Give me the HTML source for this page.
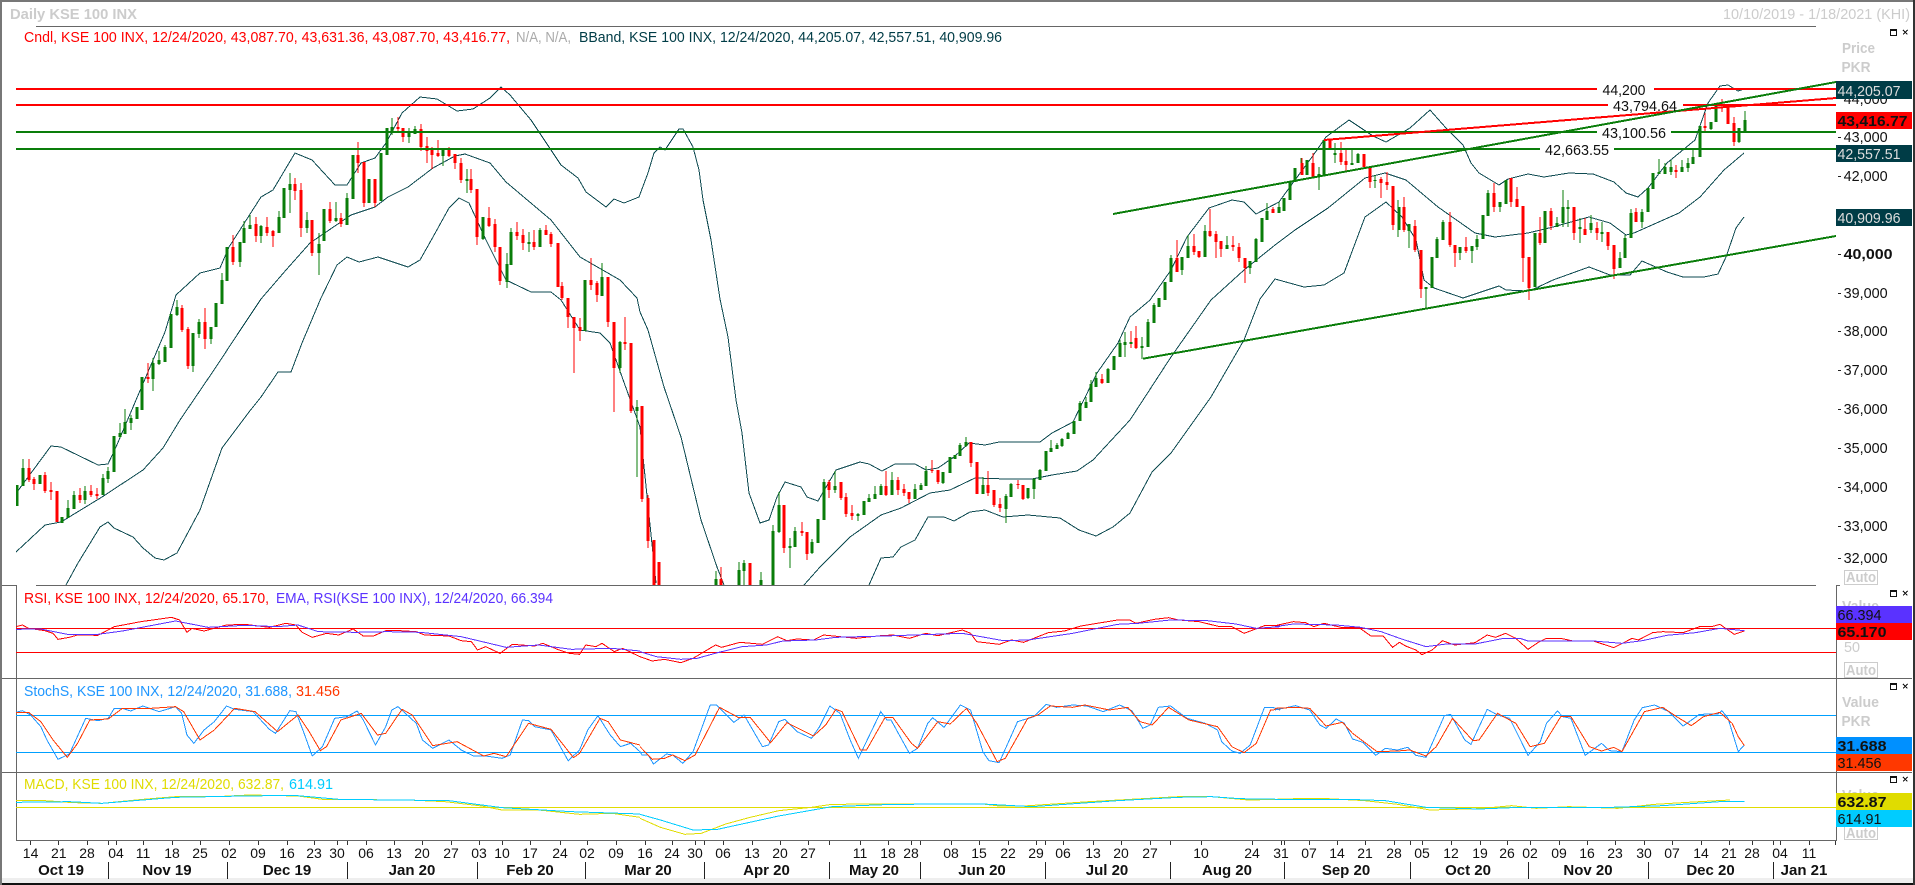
<!DOCTYPE html>
<html><head><meta charset="utf-8"><title>Daily KSE 100 INX</title>
<style>html,body{margin:0;padding:0;background:#fff;overflow:hidden}svg{display:block}text{font-family:"Liberation Sans",sans-serif;font-size:15px}.d text{font-size:14px}.b{font-weight:bold}.f{fill:none}.n{vector-effect:non-scaling-stroke;fill:none;stroke-width:1}path{shape-rendering:crispEdges}</style></head><body>
<svg width="1915" height="885" viewBox="0 0 1915 885" xmlns="http://www.w3.org/2000/svg">
<defs><clipPath id="m"><rect x="16" y="27" width="1820" height="558"/></clipPath></defs>
<rect width="1915" height="885" fill="#fff"/>
<rect y="878" width="1915" height="5" fill="#eee"/><rect y="883" width="1915" height="2" fill="#111"/>
<rect width="1915" height="2" fill="#777"/><rect width="2" height="885" fill="#777"/><rect x="1913" width="2" height="885" fill="#333"/>
<text x="10" y="19" class="b" fill="#ccc" textLength="127" lengthAdjust="spacingAndGlyphs">Daily KSE 100 INX</text>
<text x="1723" y="19" fill="#ccc" textLength="187" lengthAdjust="spacingAndGlyphs">10/10/2019 - 1/18/2021 (KHI)</text>
<text x="24" y="42" fill="#f00" textLength="486" lengthAdjust="spacingAndGlyphs">Cndl, KSE 100 INX, 12/24/2020, 43,087.70, 43,631.36, 43,087.70, 43,416.77,</text>
<text x="516" y="42" fill="#aaa" textLength="55" lengthAdjust="spacingAndGlyphs">N/A, N/A,</text>
<text x="579" y="42" fill="#003c46" textLength="423" lengthAdjust="spacingAndGlyphs">BBand, KSE 100 INX, 12/24/2020, 44,205.07, 42,557.51, 40,909.96</text>
<g clip-path="url(#m)">
<path class="f" stroke="#0d4a50" d="M17 492L51 446L61 447L98 465L108 464L116 447L165 332L176 295L200 273L220 268L229 247L261 197L273 190L295 153L312 160L335 185L347 185L361 163L375 158L386 143L402 113L420 97L437 99L457 111L473 109L490 98L501 87L510 95L531 120L561 165L578 178L586 192L606 207L614 199L624 203L639 197L648 173L654 153L660 147L665 150L679 129L683 129L693 147L699 170L703 200L711 240L720 299L728 337L736 400L742 433L749 493L760 523L769 520L777 497L785 482L801 487L807 497L818 501L836 470L860 462L869 464L882 471L895 464L915 464L926 470L938 468L954 457L969 443L985 445L999 442L1040 442L1052 433L1073 422L1097 373L1118 343L1130 317L1150 300L1171 270L1187 237L1209 208L1232 200L1244 202L1256 214L1279 202L1295 180L1312 157L1326 137L1349 120L1373 136L1386 142L1410 128L1430 110L1446 128L1463 145L1471 163L1479 173L1499 185L1508 179L1528 174L1544 177L1569 173L1593 174L1614 182L1626 193L1638 197L1648 188L1667 163L1695 140L1708 103L1720 86L1728 85L1738 91L1744 89"/>
<path class="f" stroke="#0d4a50" d="M16 552L45 525L61 522L102 497L143 470L163 448L180 420L216 367L239 332L261 299L286 270L310 243L351 215L375 207L388 197L408 187L433 168L455 156L465 154L490 163L506 182L551 220L580 257L620 280L637 298L640 312L648 330L664 387L681 437L701 520L717 567L724 585M804 585L820 567L850 537L881 515L901 508L930 493L950 490L975 478L1007 479L1032 479L1052 475L1077 471L1093 460L1130 420L1171 357L1211 300L1244 270L1275 245L1295 230L1328 208L1365 178L1385 173L1406 180L1438 207L1475 233L1495 237L1528 233L1553 227L1589 217L1610 223L1626 235L1634 233L1679 213L1700 197L1724 170L1744 153"/>
<path class="f" stroke="#0d4a50" d="M66 585L78 563L100 527L108 522L114 528L133 537L143 548L155 558L164 560L177 553L200 510L222 448L249 412L261 397L278 372L291 372L302 343L321 298L337 265L347 257L359 262L378 257L408 267L420 260L433 237L449 208L459 198L469 203L486 240L506 280L531 292L551 292L561 300L580 330L600 333L610 343L616 360L640 427L642 447L656 583M869 585L881 558L893 557L901 547L915 540L928 517L944 517L954 521L970 512L985 510L1003 517L1028 515L1060 518L1079 530L1096 536L1113 527L1130 513L1152 472L1171 453L1211 397L1244 340L1260 299L1275 279L1304 287L1324 285L1344 273L1365 217L1386 202L1402 217L1416 240L1424 280L1434 288L1463 298L1499 286L1506 290L1528 291L1536 288L1553 280L1589 267L1610 275L1630 275L1642 261L1667 272L1683 277L1704 277L1718 274L1726 257L1736 228L1744 217"/>
<g class="f">
<path class="f" stroke="#0a7d0a" stroke-width="1" d="M23 459V486M68 500V518M74 491V509M85 486V504M103 474V495M108 467V483M120 423V438M125 409V434M131 415V430M153 358V391M159 351V365M165 345V362M177 300V316M193 333V372M199 319V338M211 327V344M222 273V304M240 242V267M244 221V243M250 215V229M261 225V243M279 211V233M290 173V213M307 212V233M319 233V275M336 202V222M347 193V225M392 118V135M409 128V143M415 126V134M443 148V166M467 169V193M483 217V240M507 253V288M511 228V265M529 232V252M540 228V247M602 263V296M620 341V373M637 400V477M716 571V585M739 562V585M744 560V585M761 572V585M773 525V585M779 492V533M790 538V568M795 527V547M812 539V554M824 479V520M835 471V493M858 513V521M869 494V502M875 486V499M881 484V495M892 472V495M915 484V499M921 483V490M926 466V486M943 472V484M950 457V473M960 443V456M966 437V447M983 477V494M1006 494V523M1011 483V497M1028 488V499M1034 478V499M1040 469V480M1051 440V452M1057 443V449M1062 438V447M1068 432V439M1080 401V421M1086 397V408M1091 380V402M1096 372V387M1108 368V383M1120 340V357M1125 332V357M1142 337V359M1148 319V347M1154 303V323M1171 255V282M1182 257V275M1188 235V258M1205 225V257M1227 236V249M1250 261V274M1256 238V262M1267 203V220M1279 202V213M1284 198V211M1301 158V175M1319 167V190M1335 143V163M1352 150V165M1358 153V163M1375 175V188M1398 200V237M1409 224V248M1426 287V308M1437 237V258M1443 220V240M1460 247V260M1472 246V263M1477 235V250M1488 190V216M1500 202V212M1557 217V227M1563 190V227M1568 200V227M1580 218V243M1591 215V233M1602 222V242M1620 252V268M1625 235V258M1631 209V238M1642 209V228M1659 159V173M1665 163V174M1671 160V175M1682 160V172M1688 158V172M1693 150V164M1711 122V130M1739 128V143M1745 111V133"/>
<path class="f" stroke="#f00" stroke-width="1" d="M29 459V482M34 477V490M45 472V493M51 482V500M80 488V503M91 485V497M97 488V499M148 363V383M182 305V332M188 327V369M205 308V349M233 235V265M256 217V242M267 217V236M273 230V247M295 178V200M301 183V237M312 220V256M330 202V223M341 213V227M358 142V173M364 162V207M375 179V207M398 117V132M403 128V142M421 124V151M427 137V163M432 147V169M438 140V157M449 147V157M455 154V169M461 158V183M471 169V193M477 189V245M489 207V227M495 219V252M500 247V285M517 222V240M523 229V250M534 230V250M546 225V235M551 232V247M562 282V300M568 298V328M574 317V373M580 318V341M591 258V290M597 281V302M608 277V327M614 322V412M625 317V350M631 343V413M642 406V502M648 495V548M721 567V585M784 505V553M802 522V536M807 532V560M829 480V498M841 482V500M846 493V517M852 505V520M886 471V496M898 477V495M904 484V496M909 492V503M932 460V473M938 470V484M971 442V467M988 471V496M994 490V507M1000 498V512M1018 480V489M1023 485V500M1102 374V384M1131 331V348M1136 326V349M1177 240V272M1194 234V255M1199 251V258M1210 209V237M1216 231V258M1221 241V257M1233 236V251M1239 243V262M1245 258V283M1273 207V213M1302 158V175M1313 153V177M1341 142V165M1346 150V171M1364 154V168M1370 168V188M1381 177V198M1387 172V190M1393 186V230M1404 197V232M1415 220V252M1421 250V298M1450 212V247M1455 245V267M1466 237V253M1494 183V212M1511 178V207M1517 187V207M1523 206V282M1529 257V300M1540 217V245M1551 208V230M1574 207V240M1585 218V235M1597 222V240M1608 232V250M1614 245V279M1636 208V222M1676 165V178M1705 113V131M1722 99V112M1728 105V124M1734 117V146"/>
<path class="f" stroke="#0a7d0a" stroke-width="3" d="M17 485V506M23 468V486M40 475V484M62 517V523M68 508V518M74 495V509M85 491V500M103 478V495M108 471V479M114 436V472M120 433V437M125 422V434M131 418V423M137 407V419M142 377V410M153 363V379M159 360V364M165 347V362M171 314V348M177 307V315M193 333V366M199 322V334M211 327V339M216 303V327M222 280V304M227 247V281M240 242V262M244 228V243M250 225V229M261 226V236M279 217V233M284 188V218M290 184V190M307 220V228M319 244V253M324 209V241M336 218V221M347 198V225M353 155V199M369 179V203M381 153V201M387 128V155M392 127V131M409 132V137M415 129V134M443 148V156M467 179V181M483 217V239M507 264V282M511 232V265M529 242V244M540 230V247M585 280V331M602 277V296M620 342V368M637 407V411M716 579V585M739 570V585M744 563V571M761 580V585M773 531V585M779 505V532M790 546V548M795 531V547M812 542V553M818 519V543M824 482V520M835 486V490M858 514V516M864 501V515M869 498V502M875 494V499M881 486V495M892 480V495M915 489V499M921 485V490M926 471V486M943 472V483M950 457V473M955 455V459M960 445V456M966 442V446M983 485V494M1006 496V509M1011 484V497M1028 488V498M1034 479V489M1040 470V480M1046 451V471M1051 448V452M1057 445V449M1062 439V446M1068 433V439M1074 421V434M1080 403V421M1086 402V408M1091 384V402M1096 378V387M1108 369V383M1114 356V370M1120 343V357M1125 342V345M1131 342V344M1142 346V348M1148 322V347M1154 305V323M1159 298V307M1165 282V300M1171 258V282M1182 257V270M1188 246V258M1205 231V257M1227 245V249M1250 261V268M1256 239V262M1262 218V242M1267 211V220M1279 207V213M1284 198V211M1290 182V200M1295 168V182M1307 160V175M1319 174V177M1324 140V175M1335 153V155M1352 163V165M1358 154V163M1375 180V181M1399 207V230M1409 224V231M1426 287V289M1432 257V288M1437 239V258M1443 222V240M1460 247V253M1472 246V251M1477 239V247M1483 215V239M1488 193V216M1500 202V207M1506 180V204M1535 233V287M1545 211V243M1557 223V227M1563 207V223M1568 207V209M1580 227V229M1591 223V230M1602 232V234M1620 258V268M1625 238V258M1631 213V238M1642 212V222M1648 188V212M1653 173V189M1659 172V174M1665 167V174M1671 167V172M1682 167V172M1688 163V168M1693 157V164M1700 126V157M1711 122V129M1716 105V122M1739 128V142M1745 120V133"/>
<path class="f" stroke="#f00" stroke-width="3" d="M29 468V480M34 479V484M45 475V491M51 490V492M57 491V522M80 495V500M91 491V495M97 494V496M148 377V379M182 308V330M188 329V366M205 322V339M233 247V262M256 224V236M267 227V233M273 231V236M295 184V191M301 190V228M312 220V253M330 209V221M341 218V224M358 155V163M364 162V203M375 179V203M398 127V129M403 128V137M421 129V147M427 146V151M432 150V155M438 153V156M449 149V156M455 154V163M461 163V180M471 179V190M477 189V237M489 218V226M495 224V247M500 247V281M517 232V236M523 235V243M534 242V247M546 230V235M551 234V244M558 243V287M562 286V298M568 298V317M574 317V328M580 327V331M591 280V285M597 283V295M608 277V322M614 322V368M625 342V344M631 343V411M642 406V499M648 498V541M654 540V585M659 562V585M721 579V585M750 563V585M784 505V548M802 531V533M807 532V554M829 482V490M841 482V498M846 497V514M852 513V516M886 486V495M898 480V490M904 489V493M909 492V499M932 470V471M938 470V482M971 442V463M977 462V494M988 485V493M994 490V505M1000 504V508M1018 484V485M1023 485V499M1102 379V383M1136 338V348M1177 258V272M1194 246V252M1199 251V257M1210 231V236M1216 234V242M1221 241V249M1233 245V247M1239 247V258M1245 258V268M1273 209V213M1302 163V175M1313 163V177M1330 140V148M1341 153V162M1346 161V165M1364 154V167M1370 168V182M1381 179V183M1387 182V185M1393 186V225M1404 207V230M1415 226V250M1421 250V289M1450 222V245M1455 245V253M1466 247V251M1494 193V207M1511 178V202M1517 199V207M1523 206V258M1529 257V288M1540 233V243M1551 211V226M1574 207V233M1585 229V235M1597 228V233M1608 232V246M1614 245V269M1636 212V222M1676 170V172M1705 126V128M1722 104V106M1728 105V124M1734 123V142"/>
</g>
<path class="f" stroke="#f00" stroke-width="2" d="M16 89H1597M1654 89H1836M16 105H1608M1683 105H1836"/>
<path class="f" stroke="#0a7d0a" stroke-width="2" d="M16 132H1597M1671 132H1836M16 149H1540M1614 149H1836"/>
<path class="f" stroke="#f00" stroke-width="2" d="M1324 140L1836 98"/>
<path class="f" stroke="#0a7d0a" stroke-width="2" d="M1113 214L1836 82M1143 358.7L1836 236"/>
</g>
<g fill="#111">
<text x="1602.500" y="95" textLength="43" lengthAdjust="spacingAndGlyphs">44,200</text>
<text x="1613" y="111" textLength="64" lengthAdjust="spacingAndGlyphs">43,794.64</text>
<text x="1602" y="138" textLength="64" lengthAdjust="spacingAndGlyphs">43,100.56</text>
<text x="1545" y="155" textLength="64" lengthAdjust="spacingAndGlyphs">42,663.55</text>
</g>
<!-- panels -->
<g stroke="#666" fill="none">
<path d="M36 26.500H1816M36 585.500H1816M2 585.500H16.500V840.500H1836.500V585.500H1840M2 678.500H1912M2 772.500H1912"/>
<path stroke="#f00" d="M16 628.500H1836M16 652.500H1836"/>
<path stroke="#00a0ff" d="M16 715.500H1836M16 752.500H1836"/>
<path stroke="#e0dc00" d="M16 807.500H1836"/>
</g>
<text x="24" y="603" fill="#f00" textLength="245" lengthAdjust="spacingAndGlyphs">RSI, KSE 100 INX, 12/24/2020, 65.170,</text>
<text x="276" y="603" fill="#5a32ff" textLength="277" lengthAdjust="spacingAndGlyphs">EMA, RSI(KSE 100 INX), 12/24/2020, 66.394</text>
<text x="24" y="696" fill="#1e96ff" textLength="268" lengthAdjust="spacingAndGlyphs">StochS, KSE 100 INX, 12/24/2020, 31.688,</text>
<text x="296" y="696" fill="#ff3800" textLength="44" lengthAdjust="spacingAndGlyphs">31.456</text>
<text x="24" y="789" fill="#e0dc00" textLength="260" lengthAdjust="spacingAndGlyphs">MACD, KSE 100 INX, 12/24/2020, 632.87,</text>
<text x="289" y="789" fill="#00ccff" textLength="44" lengthAdjust="spacingAndGlyphs">614.91</text>
<g transform="translate(0,570) scale(.40816,.33333)">
<path class="n" stroke="#f00" d="M39 170L55 165L70 175L110 182L130 190L142 208L170 202L190 195L240 196L280 170L345 155L420 142L440 150L458 187L470 175L500 183L555 165L600 163L660 172L700 160L725 165L740 187L765 202L800 190L830 195L865 177L890 198L915 198L945 182L980 182L1020 185L1040 195L1100 198L1130 212L1155 215L1170 240L1190 230L1225 250L1255 223L1310 228L1330 220L1370 240L1395 250L1420 253L1435 225L1460 230L1475 220L1505 245L1525 235L1568 260"/>
<path class="n" stroke="#5a32ff" d="M39 178L100 177L165 193L240 193L300 183L430 153L510 172L600 166L680 170L730 165L780 185L870 187L950 185L1030 187L1130 200L1240 232L1320 225L1400 238L1500 235L1568 243"/>
<path class="n" stroke="#1e96ff" d="M39 427L55 422L75 435L100 470L115 510L142 568L170 552L210 445L240 452L265 445L280 415L300 415L320 423L350 408L390 425L430 410L445 430L458 495L475 520L500 480L525 455L555 408L575 418L620 425L660 478L675 490L710 422L725 425L745 490L765 558L790 530L820 445L850 440L875 423L890 450L920 525L945 470L960 420L975 410L1020 460L1035 510L1060 535L1100 510L1130 540L1160 558L1190 558L1230 565L1250 555L1280 450L1295 452L1310 470L1350 480L1392 572L1420 540L1440 480L1465 437L1495 495L1520 530L1545 520L1568 545"/>
<path class="n" stroke="#ff3800" d="M39 427L70 427L100 455L130 510L165 562L190 520L220 450L265 447L300 415L370 415L430 410L450 425L490 510L525 480L575 415L625 425L680 485L695 470L730 435L755 480L785 542L800 530L835 450L885 430L925 495L945 490L985 418L1010 435L1060 527L1120 515L1185 558L1210 550L1240 560L1295 460L1350 478L1405 563L1420 550L1470 445L1490 455L1520 510L1568 525"/>
<path class="n" stroke="#e0dc00" d="M39 692L110 692L180 698L250 700L350 688L430 680L530 680L610 675L730 678L790 688L1000 690L1090 695L1180 708L1230 720L1320 720L1420 733L1500 730L1568 742"/>
<path class="n" stroke="#00ccff" d="M39 697L170 695L250 700L430 682L600 678L720 676L830 688L1100 692L1230 713L1400 725L1568 732"/>
</g>
<g transform="translate(640,570) scale(.40816,.33333)">
<path class="n" stroke="#f00" d="M0 260L30 273L60 268L100 278L130 265L185 225L200 232L245 217L300 223L337 200L360 212L385 207L425 210L450 195L490 200L530 205L590 197L620 195L660 205L700 190L730 197L790 180L810 190L825 215L880 223L910 210L940 217L1000 188L1040 183L1080 168L1120 160L1170 150L1200 150L1215 160L1260 148L1295 143L1320 150L1370 155L1420 170L1450 170L1480 190L1530 167L1568 167"/>
<path class="n" stroke="#5a32ff" d="M0 245L40 260L100 268L140 265L190 248L250 230L310 225L350 213L430 210L480 202L600 198L790 190L890 212L950 210L1060 190L1170 163L1220 160L1300 150L1390 152L1460 162L1510 175L1568 170"/>
<path class="n" stroke="#1e96ff" d="M0 545L5 555L20 555L33 582L65 552L80 555L105 580L130 545L172 405L187 405L230 457L255 435L300 530L315 525L340 455L355 448L385 485L420 505L440 470L465 408L490 430L515 510L535 565L590 425L605 450L615 450L660 550L680 535L705 460L717 443L745 472L785 405L810 420L840 545L855 572L880 578L925 455L965 440L995 403L1020 412L1060 405L1095 408L1135 425L1175 405L1205 422L1232 475L1250 465L1270 412L1300 408L1340 445L1385 460L1415 480L1425 515L1450 543L1470 550L1495 525L1530 412L1550 412L1568 420"/>
<path class="n" stroke="#ff3800" d="M0 530L30 568L60 565L80 555L110 572L135 555L195 412L240 442L270 442L320 518L360 458L425 498L455 465L480 418L495 425L540 540L555 540L600 443L620 443L665 520L680 535L730 455L760 462L800 415L825 460L875 575L895 565L950 445L975 435L1005 408L1060 412L1090 405L1150 420L1195 412L1225 455L1255 465L1295 412L1345 450L1415 470L1450 530L1480 548L1510 520L1545 420L1568 418"/>
<path class="n" stroke="#e0dc00" d="M0 745L50 772L110 793L150 790L210 762L270 742L340 722L420 712L470 703L620 702L840 702L880 708L940 708L1100 695L1320 680L1400 680L1490 690L1568 688"/>
<path class="n" stroke="#00ccff" d="M0 733L50 750L130 780L190 778L340 738L470 710L620 703L840 702L960 710L1170 692L1320 682L1400 680L1470 686L1568 688"/>
</g>
<g transform="translate(1275,570) scale(.40816,.33333)">
<path class="n" stroke="#f00" d="M0 167L45 155L75 158L95 170L120 160L165 173L205 172L235 198L265 198L288 232L305 217L320 228L345 240L360 254L385 240L410 212L440 225L490 218L520 195L540 202L565 190L590 205L620 238L645 217L665 205L700 205L730 213L780 213L830 233L875 205L890 210L925 188L950 185L1000 188L1040 170L1070 170L1090 163L1125 193L1150 183"/>
<path class="n" stroke="#5a32ff" d="M0 170L45 162L150 165L210 172L260 185L310 207L370 230L420 222L490 222L560 205L600 205L620 213L780 213L850 220L900 212L960 196L1030 188L1090 175L1150 182"/>
<path class="n" stroke="#1e96ff" d="M0 420L20 415L50 407L85 420L110 465L125 475L150 447L170 460L190 507L215 517L247 556L270 535L300 540L325 532L345 556L370 562L415 437L430 433L465 510L480 523L520 418L545 435L575 445L620 556L650 515L665 460L692 423L705 440L725 445L760 556L800 520L820 542L850 545L880 450L900 413L930 405L965 425L1000 468L1040 433L1085 432L1095 422L1110 445L1135 545L1150 525"/>
<path class="n" stroke="#ff3800" d="M0 415L50 412L85 415L125 468L165 457L190 490L250 545L300 543L330 540L370 558L395 530L435 445L485 512L500 510L545 430L590 460L625 530L660 520L700 440L725 440L770 530L800 543L830 532L850 545L905 425L950 412L980 437L1020 467L1050 440L1090 427L1120 460L1135 500L1150 527"/>
<path class="n" stroke="#e0dc00" d="M0 688L50 686L130 686L220 692L300 703L380 720L500 716L580 707L640 715L720 710L840 715L930 703L1040 695L1115 690"/>
<path class="n" stroke="#00ccff" d="M0 688L180 688L270 692L370 712L500 717L600 712L800 713L950 707L1090 695L1150 694"/>
</g>
<!-- right axis -->
<g fill="#111">
<text x="1843.600" y="104" textLength="44" lengthAdjust="spacingAndGlyphs">44,000</text>
<text x="1843.600" y="142" textLength="44" lengthAdjust="spacingAndGlyphs">43,000</text>
<text x="1843.600" y="181" textLength="44" lengthAdjust="spacingAndGlyphs">42,000</text>
<text x="1843.600" y="259" class="b" textLength="49" lengthAdjust="spacingAndGlyphs">40,000</text>
<text x="1843.600" y="298" textLength="44" lengthAdjust="spacingAndGlyphs">39,000</text>
<text x="1843.600" y="336" textLength="44" lengthAdjust="spacingAndGlyphs">38,000</text>
<text x="1843.600" y="375" textLength="44" lengthAdjust="spacingAndGlyphs">37,000</text>
<text x="1843.600" y="414" textLength="44" lengthAdjust="spacingAndGlyphs">36,000</text>
<text x="1843.600" y="453" textLength="44" lengthAdjust="spacingAndGlyphs">35,000</text>
<text x="1843.600" y="492" textLength="44" lengthAdjust="spacingAndGlyphs">34,000</text>
<text x="1843.600" y="531" textLength="44" lengthAdjust="spacingAndGlyphs">33,000</text>
<text x="1843.600" y="563" textLength="44" lengthAdjust="spacingAndGlyphs">32,000</text>
</g>
<path stroke="#222" d="M1838 137.500H1841M1838 176.500H1841M1838 254.500H1841M1838 293.500H1841M1838 331.500H1841M1838 370.500H1841M1838 409.500H1841M1838 448.500H1841M1838 487.500H1841M1838 526.500H1841M1838 558.500H1841"/>
<g fill="#ccc">
<text x="1842" y="53" class="b" textLength="33" lengthAdjust="spacingAndGlyphs">Price</text>
<text x="1841.500" y="72" class="b" textLength="29" lengthAdjust="spacingAndGlyphs">PKR</text>
<text x="1842" y="611" class="b" textLength="37" lengthAdjust="spacingAndGlyphs">Value</text>
<text x="1844" y="652" textLength="16" lengthAdjust="spacingAndGlyphs">50</text>
<text x="1842" y="707" class="b" textLength="37" lengthAdjust="spacingAndGlyphs">Value</text>
<text x="1841.500" y="726" class="b" textLength="29" lengthAdjust="spacingAndGlyphs">PKR</text>
<text x="1842" y="800" class="b" textLength="37" lengthAdjust="spacingAndGlyphs">Value</text>
<text x="1846" y="582" class="b" textLength="30" lengthAdjust="spacingAndGlyphs">Auto</text>
<text x="1846" y="675" class="b" textLength="30" lengthAdjust="spacingAndGlyphs">Auto</text>
<text x="1846" y="838" class="b" textLength="30" lengthAdjust="spacingAndGlyphs">Auto</text>
</g>
<g fill="none" stroke="#ccc" shape-rendering="crispEdges"><rect x="1844.500" y="570.500" width="33" height="14"/><rect x="1844.500" y="662.500" width="33" height="15"/><rect x="1844.500" y="826.500" width="33" height="13"/></g>
<g>
<rect x="1836" y="81" width="76" height="18" fill="#003c46"/><text x="1837.500" y="96" fill="#ddd" textLength="63" lengthAdjust="spacingAndGlyphs">44,205.07</text>
<rect x="1836" y="112" width="76" height="17" fill="#f00"/><text x="1837.500" y="126" class="b" fill="#111" textLength="70" lengthAdjust="spacingAndGlyphs">43,416.77</text>
<rect x="1836" y="145" width="76" height="17" fill="#003c46"/><text x="1837.500" y="159" fill="#ddd" textLength="63" lengthAdjust="spacingAndGlyphs">42,557.51</text>
<rect x="1836" y="209" width="76" height="17" fill="#003c46"/><text x="1837.500" y="223" fill="#ddd" textLength="63" lengthAdjust="spacingAndGlyphs">40,909.96</text>
<rect x="1836" y="606" width="76" height="17" fill="#5a32ff"/><text x="1837.500" y="620" fill="#111" textLength="44" lengthAdjust="spacingAndGlyphs">66.394</text>
<rect x="1836" y="623" width="76" height="17" fill="#f00"/><text x="1837.500" y="637" class="b" fill="#111" textLength="49" lengthAdjust="spacingAndGlyphs">65.170</text>
<rect x="1836" y="737" width="76" height="17" fill="#0090ff"/><text x="1837.500" y="751" class="b" fill="#111" textLength="49" lengthAdjust="spacingAndGlyphs">31.688</text>
<rect x="1836" y="754" width="76" height="17" fill="#ff3800"/><text x="1837.500" y="768" fill="#111" textLength="44" lengthAdjust="spacingAndGlyphs">31.456</text>
<rect x="1836" y="793" width="76" height="17" fill="#e0dc00"/><text x="1837.500" y="807" class="b" fill="#111" textLength="49" lengthAdjust="spacingAndGlyphs">632.87</text>
<rect x="1836" y="810" width="76" height="17" fill="#00ccff"/><text x="1837.500" y="824" fill="#111" textLength="44" lengthAdjust="spacingAndGlyphs">614.91</text>
</g>
<!-- window icons -->
<g fill="none" stroke="#111">
<path d="M1890.500 29.500h6v6h-6zM1890.500 30.500h6M1890.500 590.500h6v6h-6zM1890.500 591.500h6M1890.500 683.500h6v6h-6zM1890.500 684.500h6M1890.500 776.500h6v6h-6zM1890.500 777.500h6"/>
</g>
<path fill="none" stroke="#111" d="M1903 30l4.500 4.500m0-4.500l-4.500 4.500M1903 591l4.500 4.500m0-4.500l-4.500 4.500M1903 684l4.500 4.500m0-4.500l-4.500 4.500M1903 777l4.500 4.500m0-4.500l-4.500 4.500"/>
<!-- x axis -->
<path stroke="#333" fill="none" d="M30.500 841v4M58.500 841v4M87.500 841v4M108.500 841v4M116.500 841v4M143.500 841v4M172.500 841v4M200.500 841v4M229.500 841v4M258.500 841v4M287.500 841v4M314.500 841v4M337.500 841v4M347.500 841v4M366.500 841v4M394.500 841v4M422.500 841v4M451.500 841v4M479.500 841v4M502.500 841v4M530.500 841v4M560.500 841v4M587.500 841v4M616.500 841v4M645.500 841v4M672.500 841v4M695.500 841v4M704.500 841v4M723.500 841v4M752.500 841v4M780.500 841v4M808.500 841v4M829.500 841v4M860.500 841v4M888.500 841v4M911.500 841v4M920.500 841v4M951.500 841v4M979.500 841v4M1008.500 841v4M1036.500 841v4M1045.500 841v4M1063.500 841v4M1093.500 841v4M1121.500 841v4M1150.500 841v4M1170.500 841v4M1201.500 841v4M1252.500 841v4M1281.500 841v4M1284.500 841v4M1309.500 841v4M1337.500 841v4M1365.500 841v4M1394.500 841v4M1410.500 841v4M1422.500 841v4M1451.500 841v4M1480.500 841v4M1507.500 841v4M1530.500 841v4M1559.500 841v4M1587.500 841v4M1615.500 841v4M1644.500 841v4M1672.500 841v4M1701.500 841v4M1729.500 841v4M1752.500 841v4M1773.500 841v4M1780.500 841v4M1809.500 841v4M1835.500 841v4"/>
<g class="d" fill="#111" text-anchor="middle">
<text x="30.600" y="858">14</text><text x="58.800" y="858">21</text><text x="87" y="858">28</text><text x="116" y="858">04</text><text x="143" y="858">11</text><text x="172" y="858">18</text><text x="200" y="858">25</text><text x="229" y="858">02</text><text x="258" y="858">09</text><text x="287" y="858">16</text><text x="314" y="858">23</text><text x="337" y="858">30</text><text x="366" y="858">06</text><text x="394" y="858">13</text><text x="422" y="858">20</text><text x="451" y="858">27</text><text x="479" y="858">03</text><text x="502" y="858">10</text><text x="530" y="858">17</text><text x="560" y="858">24</text><text x="587" y="858">02</text><text x="616" y="858">09</text><text x="645" y="858">16</text><text x="672" y="858">24</text><text x="695" y="858">30</text><text x="723" y="858">06</text><text x="752" y="858">13</text><text x="780" y="858">20</text><text x="808" y="858">27</text><text x="860" y="858">11</text><text x="888" y="858">18</text><text x="911" y="858">28</text><text x="951" y="858">08</text><text x="979" y="858">15</text><text x="1008" y="858">22</text><text x="1036" y="858">29</text><text x="1063" y="858">06</text><text x="1093" y="858">13</text><text x="1121" y="858">20</text><text x="1150" y="858">27</text><text x="1201" y="858">10</text><text x="1252" y="858">24</text><text x="1281" y="858">31</text><text x="1309" y="858">07</text><text x="1337" y="858">14</text><text x="1365" y="858">21</text><text x="1394" y="858">28</text><text x="1422" y="858">05</text><text x="1451" y="858">12</text><text x="1480" y="858">19</text><text x="1507" y="858">26</text><text x="1530" y="858">02</text><text x="1559" y="858">09</text><text x="1587" y="858">16</text><text x="1615" y="858">23</text><text x="1644" y="858">30</text><text x="1672" y="858">07</text><text x="1701" y="858">14</text><text x="1729" y="858">21</text><text x="1752" y="858">28</text><text x="1780" y="858">04</text><text x="1809" y="858">11</text>
</g>
<g fill="#111" text-anchor="middle" style="font-weight:bold">
<text x="61" y="875">Oct 19</text><text x="167" y="875">Nov 19</text><text x="287" y="875">Dec 19</text><text x="412" y="875">Jan 20</text><text x="530" y="875">Feb 20</text><text x="648" y="875">Mar 20</text><text x="766.500" y="875">Apr 20</text><text x="874" y="875">May 20</text><text x="982" y="875">Jun 20</text><text x="1107" y="875">Jul 20</text><text x="1227" y="875">Aug 20</text><text x="1346" y="875">Sep 20</text><text x="1468" y="875">Oct 20</text><text x="1588" y="875">Nov 20</text><text x="1710.500" y="875">Dec 20</text><text x="1804" y="875">Jan 21</text>
</g>
<path stroke="#222" fill="none" d="M108.500 862v17M227.500 862v17M347.500 862v17M477.500 862v17M585.500 862v17M704.500 862v17M829.500 862v17M920.500 862v17M1045.500 862v17M1170.500 862v17M1284.500 862v17M1410.500 862v17M1528.500 862v17M1648.500 862v17M1773.500 862v17"/>
</svg>
</body></html>
